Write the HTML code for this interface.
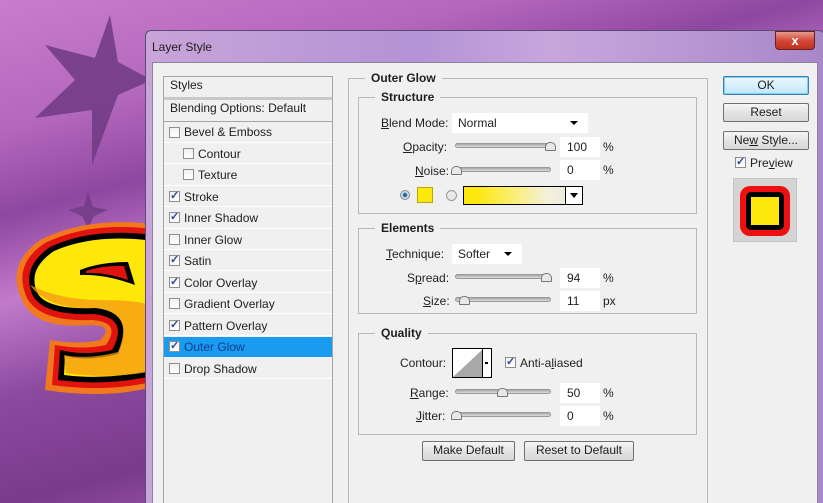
<!DOCTYPE html>
<html><head><meta charset="utf-8"><style>
*{box-sizing:border-box;margin:0;padding:0}
html,body{width:823px;height:503px;overflow:hidden}
body{position:relative;font-family:"Liberation Sans",sans-serif;font-size:12px;color:#1e1e1e;
background:linear-gradient(165deg,#c77ccc 0%,#b468bd 18%,#8e47a0 30%,#c27bcb 42%,#8d4a9f 55%,#7a3b8c 70%,#9b56aa 80%,#5e2870 100%)}
.a{position:absolute}
.t{position:absolute;white-space:nowrap;line-height:14px}
.u{text-decoration:underline}
.cb{position:absolute;width:11px;height:11px;border:1px solid #8e8f8f;background:linear-gradient(#f0f0f0,#fff)}
.cb.on::after{content:"✓";position:absolute;left:0;top:-3px;font-size:11px;color:#2a4a9a;font-weight:bold}
.row{position:absolute;left:164px;width:168px;height:21px;border-bottom:1px solid #fff}
.btn{position:absolute;border:1px solid #707070;border-radius:2px;background:linear-gradient(#f6f6f6,#e3e3e3 50%,#d8d8d8);text-align:center;line-height:17px}
.fs{position:absolute;border:1px solid #b8b8b8}
.lg{position:absolute;top:-8px;background:#f0f0f0;padding:0 6px;font-weight:bold;line-height:14px}
.sl{position:absolute;height:5px;width:96px;border-radius:3px;background:linear-gradient(#a8a8a8,#dcdcdc);border:1px solid #9a9a9a}
.th{position:absolute;width:11px;height:9px;background:#e8e8e8;border:1px solid #777;border-radius:5px 5px 1px 1px}
.inp{position:absolute;width:40px;height:20px;background:#fff;line-height:20px;padding-left:7px}
.sel{position:absolute;height:20px;background:#fff;line-height:20px;padding-left:6px}
.sel::after{content:"";position:absolute;right:10px;top:8px;border:4px solid transparent;border-top:4px solid #000}
</style></head><body>
<svg class="a" style="left:0;top:0" width="160" height="503" viewBox="0 0 160 503">
<polygon points="110,15 118,62 152,80 118,95 92,165 92,110 35,118 75,80 45,45 95,58" fill="#6f3a83" opacity=".85"/>
<polygon points="88,192 93,207 108,210 94,216 88,228 82,216 68,210 84,206" fill="#6f3a83" opacity=".8"/>
<path d="M160,225 Q90,215 40,240 Q5,265 22,300 Q35,330 90,325 Q115,325 100,340 Q80,345 50,340 L45,390 Q110,400 160,385 Z" fill="#f2781e"/>
<path d="M160,230 Q92,220 45,243 Q12,265 27,298 Q40,322 92,320 Q122,322 106,345 Q82,350 55,345 L52,385 Q110,393 160,380 Z" fill="#e0130f"/>
<path d="M160,236 Q95,226 50,247 Q20,268 33,296 Q45,316 94,314 Q130,318 112,350 Q85,356 60,350 L58,380 Q110,387 160,374 Z" fill="#000"/>
<path d="M160,242 Q98,232 54,251 Q26,270 38,294 Q48,310 96,308 Q136,313 118,354 Q88,362 65,356 L64,375 Q110,381 160,368 Z" fill="#fde80a"/>
<path d="M80,270 Q100,262 128,262 L135,285 Q105,274 80,275 Z" fill="#000"/><path d="M86,271 Q104,265 124,266 L128,280 Q105,272 86,273 Z" fill="#e0130f"/>
<path d="M30,285 Q60,300 100,300 Q150,300 160,310 L160,370 Q110,380 66,373 L64,355 Q88,360 118,352 Q135,312 96,308 Q48,310 30,285Z" fill="#f49a14" opacity=".75"/>
</svg>
<div class="a" style="left:145px;top:30px;width:680px;height:473px;border:1px solid #5a4a78;border-bottom:none;border-radius:6px 6px 0 0;background:linear-gradient(90deg,#c9a4d8,#b493d6 40%,#c8a6dc 60%,#a887c9)"></div>
<div class="t" style="left:152px;top:40px">Layer Style</div>
<div class="a" style="left:775px;top:31px;width:40px;height:19px;border:1px solid #6b2020;border-radius:0 0 4px 4px;background:linear-gradient(#e89a8a,#d2493a 50%,#c1301f);color:#fff;text-align:center;font-weight:bold;line-height:17px;font-size:13px">x</div>
<div class="a" style="left:152px;top:62px;width:666px;height:441px;background:#f0f0f0;border:1px solid #8a86a0;border-bottom:none"></div>
<div class="a" style="left:163px;top:76px;width:170px;height:427px;border:1px solid #a5a5a5;border-bottom:none;background:#f0f0f0"></div>
<div class="t" style="left:170px;top:78px">Styles</div>
<div class="a" style="left:164px;top:97px;width:168px;height:3px;background:#c8c8c8"></div>
<div class="t" style="left:170px;top:101px">Blending Options: Default</div>
<div class="a" style="left:164px;top:121px;width:168px;height:1px;background:#a5a5a5"></div>
<div class="row" style="top:122px"></div><div class="row" style="top:143px"></div><div class="row" style="top:165px"></div><div class="row" style="top:186px"></div><div class="row" style="top:208px"></div><div class="row" style="top:229px"></div><div class="row" style="top:250px"></div><div class="row" style="top:272px"></div><div class="row" style="top:293px"></div><div class="row" style="top:315px"></div><div class="row" style="top:358px"></div>
<div class="a" style="left:164px;top:337px;width:168px;height:20px;background:#199bef"></div>
<div class="cb" style="left:169px;top:127px"></div><div class="t" style="left:184px;top:125px">Bevel &amp; Emboss</div>
<div class="cb" style="left:183px;top:148px"></div><div class="t" style="left:198px;top:147px">Contour</div>
<div class="cb" style="left:183px;top:169px"></div><div class="t" style="left:198px;top:168px">Texture</div>
<div class="cb on" style="left:169px;top:191px"></div><div class="t" style="left:184px;top:190px">Stroke</div>
<div class="cb on" style="left:169px;top:212px"></div><div class="t" style="left:184px;top:211px">Inner Shadow</div>
<div class="cb" style="left:169px;top:234px"></div><div class="t" style="left:184px;top:233px">Inner Glow</div>
<div class="cb on" style="left:169px;top:255px"></div><div class="t" style="left:184px;top:254px">Satin</div>
<div class="cb on" style="left:169px;top:277px"></div><div class="t" style="left:184px;top:276px">Color Overlay</div>
<div class="cb" style="left:169px;top:298px"></div><div class="t" style="left:184px;top:297px">Gradient Overlay</div>
<div class="cb on" style="left:169px;top:320px"></div><div class="t" style="left:184px;top:319px">Pattern Overlay</div>
<div class="cb on" style="left:169px;top:341px"></div><div class="t" style="left:184px;top:340px;color:#0b3d8a">Outer Glow</div>
<div class="cb" style="left:169px;top:363px"></div><div class="t" style="left:184px;top:362px">Drop Shadow</div>
<div class="fs" style="left:348px;top:78px;width:360px;height:425px;border-bottom:none"><div class="lg" style="left:16px">Outer Glow</div></div>
<div class="fs" style="left:358px;top:97px;width:339px;height:117px"><div class="lg" style="left:16px">Structure</div></div>
<div class="t" style="left:381px;top:116px"><span class="u">B</span>lend Mode:</div>
<div class="sel" style="left:452px;top:113px;width:136px">Normal</div>
<div class="t" style="left:403px;top:140px"><span class="u">O</span>pacity:</div>
<div class="sl" style="left:455px;top:143px"></div><div class="th" style="left:545px;top:142px"></div>
<div class="inp" style="left:560px;top:137px">100</div><div class="t" style="left:603px;top:140px">%</div>
<div class="t" style="left:415px;top:164px"><span class="u">N</span>oise:</div>
<div class="sl" style="left:455px;top:167px"></div><div class="th" style="left:451px;top:166px"></div>
<div class="inp" style="left:560px;top:160px">0</div><div class="t" style="left:603px;top:163px">%</div>
<div class="a" style="left:400px;top:190px;width:10px;height:10px;border-radius:50%;background:radial-gradient(#1a6a9a 30%,#bfd4e0 45%,#eee);border:1px solid #888"></div>
<div class="a" style="left:417px;top:187px;width:16px;height:16px;background:#fce80c;border:1px solid #b8a800"></div>
<div class="a" style="left:446px;top:190px;width:11px;height:11px;border-radius:50%;background:#e8e8e8;border:1px solid #999"></div>
<div class="a" style="left:463px;top:186px;width:120px;height:19px;border:1px solid #000;background:linear-gradient(90deg,#fce80c 10%,#fbee70 40%,#f3f1d8 70%,#e6e6e6)"></div>
<div class="a" style="left:565px;top:186px;width:18px;height:19px;border:1px solid #000;background:#fff"></div>
<div class="a" style="left:570px;top:193px;border:4px solid transparent;border-top:5px solid #000"></div>
<div class="fs" style="left:358px;top:228px;width:339px;height:86px"><div class="lg" style="left:16px">Elements</div></div>
<div class="t" style="left:386px;top:247px"><span class="u">T</span>echnique:</div>
<div class="sel" style="left:452px;top:244px;width:70px">Softer</div>
<div class="t" style="left:407px;top:271px">S<span class="u">p</span>read:</div>
<div class="sl" style="left:455px;top:274px"></div><div class="th" style="left:541px;top:273px"></div>
<div class="inp" style="left:560px;top:268px">94</div><div class="t" style="left:603px;top:271px">%</div>
<div class="t" style="left:423px;top:294px"><span class="u">S</span>ize:</div>
<div class="sl" style="left:455px;top:297px"></div><div class="th" style="left:459px;top:296px"></div>
<div class="inp" style="left:560px;top:291px">11</div><div class="t" style="left:603px;top:294px">px</div>
<div class="fs" style="left:358px;top:333px;width:339px;height:102px"><div class="lg" style="left:16px">Quality</div></div>
<div class="t" style="left:400px;top:356px">Contour:</div>
<div class="a" style="left:452px;top:348px;width:40px;height:30px;border:1px solid #000;background:#fff"></div>
<svg class="a" style="left:453px;top:349px" width="30" height="28"><polygon points="0,28 30,0 30,28" fill="#a8a8a8"/></svg>
<div class="a" style="left:482px;top:348px;width:10px;height:30px;border-left:1px solid #000"></div>
<div class="a" style="left:485px;top:362px;width:3px;height:2px;background:#000"></div>
<div class="cb on" style="left:505px;top:357px"></div><div class="t" style="left:520px;top:356px">Anti-a<span class="u">l</span>iased</div>
<div class="t" style="left:410px;top:386px"><span class="u">R</span>ange:</div>
<div class="sl" style="left:455px;top:389px"></div><div class="th" style="left:497px;top:388px"></div>
<div class="inp" style="left:560px;top:383px">50</div><div class="t" style="left:603px;top:386px">%</div>
<div class="t" style="left:416px;top:409px"><span class="u">J</span>itter:</div>
<div class="sl" style="left:455px;top:412px"></div><div class="th" style="left:451px;top:411px"></div>
<div class="inp" style="left:560px;top:406px">0</div><div class="t" style="left:603px;top:409px">%</div>
<div class="btn" style="left:422px;top:441px;width:93px;height:20px">Make Default</div>
<div class="btn" style="left:524px;top:441px;width:110px;height:20px">Reset to Default</div>
<div class="btn" style="left:723px;top:76px;width:86px;height:19px;border:1px solid #3c7fb1;box-shadow:inset 0 0 0 1px #7fd0f0;background:linear-gradient(#eaf6fd,#d9f0fc 50%,#bee6fd)">OK</div>
<div class="btn" style="left:723px;top:103px;width:86px;height:19px">Reset</div>
<div class="btn" style="left:723px;top:131px;width:86px;height:19px">Ne<span class="u">w</span> Style...</div>
<div class="cb on" style="left:735px;top:157px"></div><div class="t" style="left:750px;top:156px">Pre<span class="u">v</span>iew</div>
<div class="a" style="left:733px;top:178px;width:64px;height:64px;background:#d4d4d4;border:1px solid #c4c4c4"></div>
<div class="a" style="left:740px;top:186px;width:50px;height:50px;border-radius:10px;background:#ee1010"></div>
<div class="a" style="left:746px;top:192px;width:38px;height:38px;border-radius:5px;background:#000"></div>
<div class="a" style="left:751px;top:197px;width:28px;height:28px;background:#fce80c"></div>
</body></html>
